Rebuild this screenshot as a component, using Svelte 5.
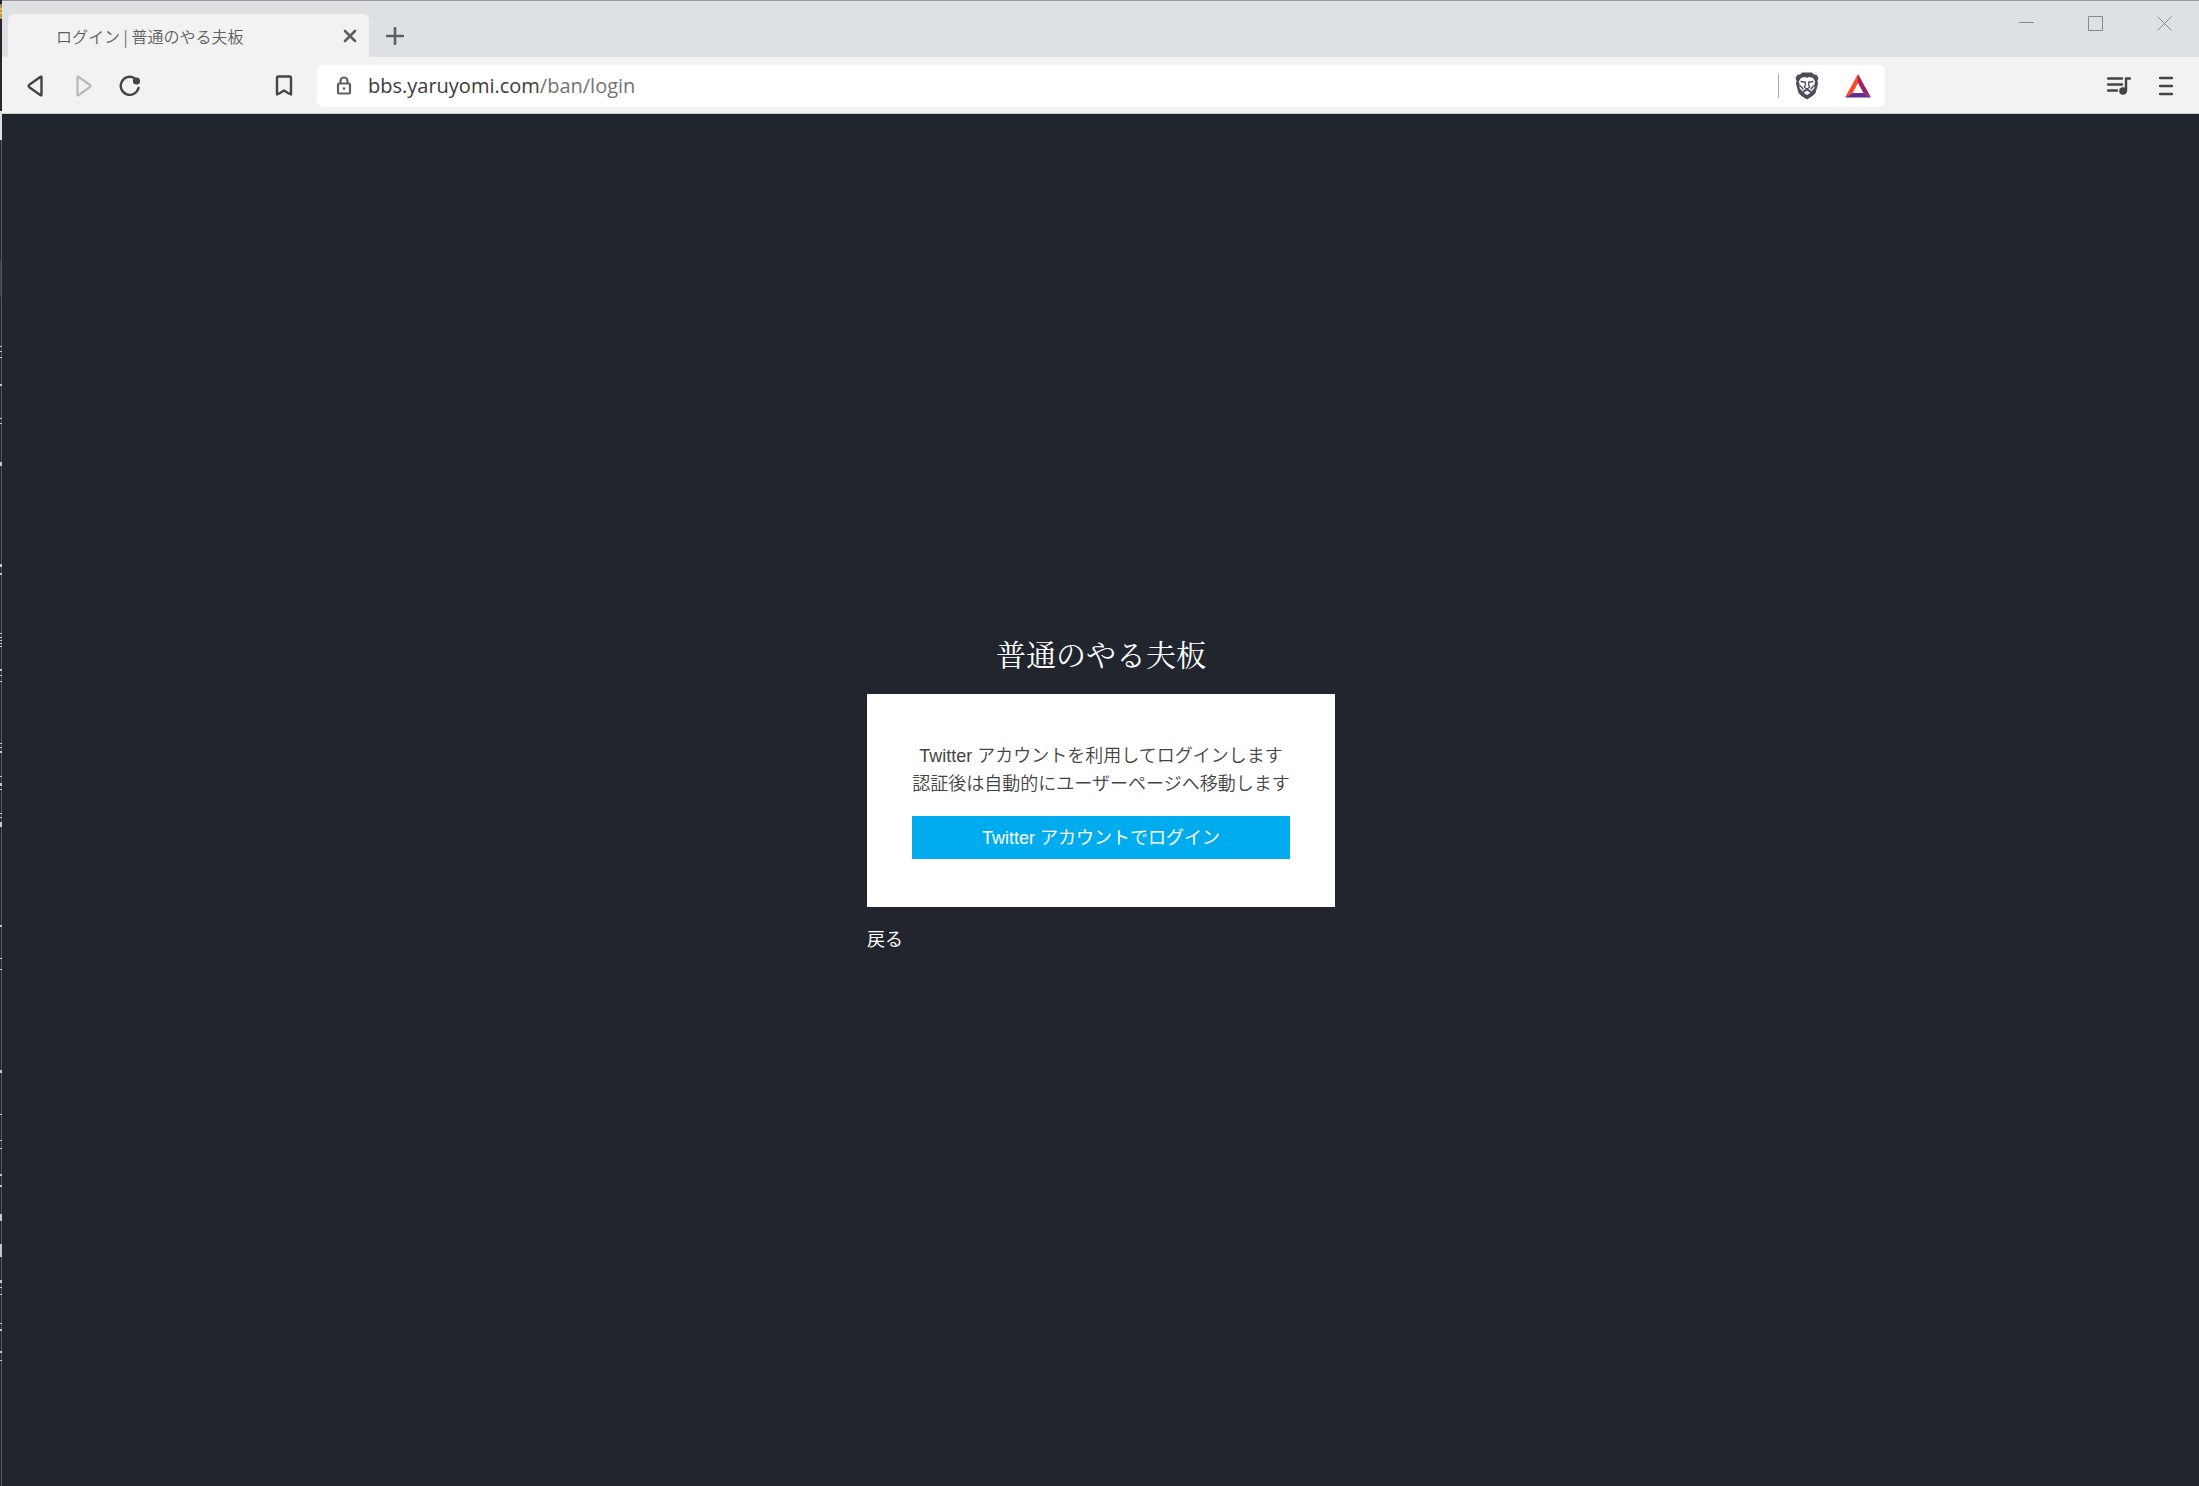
<script>
  const host = 'bbs.yaruyomi.com';
  const path = '/ban/login';
  const marks = [
    [346, 1], [351, 1], [357, 1], [384, 2], [418, 1], [423, 1], [462, 4],
    [564, 3], [573, 2], [633, 1], [637, 1], [640, 1], [643, 1], [646, 1], [669, 2], [675, 1], [681, 1],
    [743, 1], [747, 1], [751, 2], [776, 1], [783, 3], [789, 1], [813, 1], [817, 1], [822, 5],
    [925, 2], [958, 1], [969, 1], [1070, 3], [1114, 1], [1140, 1], [1148, 1], [1174, 2], [1185, 2],
    [1214, 7], [1244, 13], [1280, 3], [1287, 1], [1294, 1], [1323, 1], [1329, 2], [1351, 2], [1360, 1]
  ];
</script>

<div class="desktop">
  <svg class="behind" aria-hidden="true" width="2" height="1486" viewBox="0 0 2 1486">
    <rect width="2" height="1486" fill="#26262c" />
    <rect x="1" y="140" width="1" height="1346" fill="#56565a" />
    <rect y="261" width="1" height="36" fill="#3e3e43" />
    <rect y="111" width="2" height="29" fill="#dcdedf" />
    <rect y="6" width="2" height="12" fill="#c99530" />
    <path d="M0 5h2M0 9h2M0 13h2M0 18h2" stroke="#e8e2d0" />
    {#each marks as [y, h]}
      <rect {y} width="2" height={h} fill="#c8c8c8" />
    {/each}
  </svg>

  <div class="window">
    <header class="titlebar">
      <div class="tab">
        <span class="tab-title">ログイン | 普通のやる夫板</span>
        <button class="tab-close" aria-label="タブを閉じる">
          <svg width="14" height="14" viewBox="0 0 14 14"><path d="M2 2l10 10M12 2L2 12" /></svg>
        </button>
      </div>
      <button class="new-tab" aria-label="新しいタブ">
        <svg width="18" height="18" viewBox="0 0 18 18"><path d="M9 1v16M1 9h16" /></svg>
      </button>
      <div class="controls">
        <button aria-label="最小化">
          <svg width="16" height="16" viewBox="0 0 16 16"><path d="M0 6.5h15" /></svg>
        </button>
        <button aria-label="最大化">
          <svg width="16" height="16" viewBox="0 0 16 16"><path d="M.5 .5h14v14H.5z" /></svg>
        </button>
        <button aria-label="閉じる">
          <svg width="16" height="16" viewBox="0 0 16 16"><path d="M.5 .5l14 14M14.5 .5l-14 14" /></svg>
        </button>
      </div>
    </header>

    <nav class="toolbar">
      <div class="history">
        <button aria-label="戻る">
          <svg width="20" height="22" viewBox="0 0 20 22"><path d="M15.5 2.2v17.6q0 .8-.9.4L3.3 12.2q-1.4-1.2 0-2.4L14.6 1.8q.9-.4.9.4z" /></svg>
        </button>
        <button class="disabled" aria-label="進む" disabled>
          <svg width="20" height="22" viewBox="0 0 20 22"><path d="M4.5 2.2v17.6q0 .8.9.4L16.7 12.2q1.4-1.2 0-2.4L5.4 1.8q-.9-.4-.9.4z" /></svg>
        </button>
        <button aria-label="再読み込み">
          <svg width="22" height="22" viewBox="0 0 22 22"><path d="M15.5 3.2A9 9 0 1 0 19.5 13" /><circle class="solid" cx="17.5" cy="6" r="3.6" /></svg>
        </button>
      </div>
      <button class="bookmark" aria-label="ブックマーク">
        <svg width="18" height="22" viewBox="0 0 18 22"><path d="M2 3q0-1.5 1.5-1.5h11Q16 1.5 16 3v16.500l-3-1.500-4-2.500-4 2.500-3 1.500z" /></svg>
      </button>
      <div class="address">
        <svg class="lock" width="16" height="20" viewBox="0 0 16 20" aria-hidden="true">
          <rect x="2" y="7.5" width="12" height="10" rx="1" /><path d="M4.5 7V5a3.5 3.5 0 0 1 7 0v2" /><circle cx="8" cy="12.5" r="1.3" />
        </svg>
        <a class="url" href="https://bbs.yaruyomi.com/ban/login">{host}<span>{path}</span></a>
        <div class="shields">
          <button aria-label="Brave Shields">
            <svg width="24" height="28" viewBox="0 0 24 28">
              <path fill="#4c4c5e" d="M7 .5h10l2 2 2.500.2L23.500 6l-1 3 .5 3-2.500 9-3 3L12 27.500 6.500 24l-3-3L1 12l.5-3-1-3 2-3.300L5 2.500z" />
              <path fill="#fff" d="M6 6l3.500-1 2.500.8L14.500 5l3.500 1 2.200 3.500-1 3.500.3 3-3 3.500-1.500-1.500-3-1.500-3 1.500L7.500 19.500l-3-3.500.3-3-1-3.500z" />
              <path fill="#fff" d="M12 18.500l3.500 2.200L12 23l-3.500-2.300z" />
              <path fill="none" stroke="#4c4c5e" stroke-width="1.300" d="M6 9.500l4.500.8M18 9.500l-4.500.8M10.300 10v3l-1 2.200 2.700 1.800 2.700-1.800-1-2.200v-3M5.500 14l2.500 3M18.500 14L16 17" />
            </svg>
          </button>
          <button aria-label="Brave Rewards">
            <svg width="28" height="24" viewBox="0 0 28 24">
              <path fill="#ff4724" d="M14 0v9L8.500 19 1 23.500z" />
              <path fill="#9e1f63" d="M14 0v9l5.500 10 7.500 4.500z" />
              <path fill="#662d91" d="M1 23.500L8.500 19h11l7.500 4.500z" />
            </svg>
          </button>
        </div>
      </div>
      <div class="tools">
        <button aria-label="メディアリスト">
          <svg width="24" height="20" viewBox="0 0 24 20"><path d="M1 2.500h14M1 8.500h14M1 14.500h9M23 2.500h-4V15" /><circle class="solid" cx="16" cy="15" r="3.800" /></svg>
        </button>
        <button aria-label="メニュー">
          <svg width="14" height="20" viewBox="0 0 14 20"><path d="M1 2h12M1 10h12M1 18h12" /></svg>
        </button>
      </div>
    </nav>

    <main>
      <h1>普通のやる夫板</h1>
      <section class="card">
        <p>Twitter アカウントを利用してログインします<br />認証後は自動的にユーザーページへ移動します</p>
        <button class="login">Twitter アカウントでログイン</button>
      </section>
      <a class="back" href="/">戻る</a>
    </main>
  </div>
</div>

<style>
  :global(body) { margin: 0; background: #21252d; }
  .desktop { display: flex; min-height: 100vh; overflow: hidden; font-family: "Liberation Sans", "Noto Sans CJK JP", sans-serif; }
  .behind { flex: none; }
  .window { flex: 1; min-width: 0; display: flex; flex-direction: column; background: #21252d; }
  button { display: flex; align-items: center; justify-content: center; padding: 0; border: 0; background: none; font: inherit; cursor: pointer; }
  button svg { fill: none; stroke: #444; stroke-width: 2.4; stroke-linejoin: round; stroke-linecap: round; }
  button .solid { fill: #444; stroke: none; }

  .titlebar { display: flex; align-items: flex-end; height: 57px; box-sizing: border-box; border-top: 1px solid #96999d; background: #dde1e4; }
  .tab { display: flex; align-items: center; justify-content: space-between; width: 361px; height: 43px; margin-left: 6px; padding: 0 12px 0 48px; box-sizing: border-box; border-radius: 6px 6px 0 0; background: #f2f2f2; }
  .tab-title { font-family: "Noto Sans CJK JP", sans-serif; font-size: 16px; font-weight: 350; line-height: 24px; color: #5d6063; }
  .tab-close svg, .new-tab svg { stroke: #5d6063; stroke-width: 2.6; }
  .new-tab { width: 36px; height: 42px; margin-left: 8px; }
  .controls { display: flex; align-self: flex-start; margin-left: auto; }
  .controls button { width: 69px; height: 46px; }
  .controls svg { stroke: #868a8d; stroke-width: 1; stroke-linecap: butt; stroke-linejoin: miter; }

  .toolbar { display: flex; align-items: center; height: 57px; padding-top: 2px; box-sizing: border-box; border-bottom: 1px solid #cfd1d3; background: #f2f2f2; }
  .history { display: flex; gap: 7px; margin-left: 14px; }
  .history button { width: 40px; height: 40px; }
  .history .disabled svg { stroke: #bcbcbc; }
  .bookmark { width: 40px; height: 40px; margin-left: 114px; }
  .address { display: flex; align-items: center; flex: 1; height: 42px; margin-left: 13px; padding: 0 13px 0 19px; box-sizing: border-box; border-radius: 6px; background: #fff; }
  .lock { fill: none; stroke: #606060; stroke-width: 2.2; }
  .lock circle { fill: #606060; stroke: none; }
  .url { margin-left: 16px; font-family: "Open Sans", sans-serif; font-size: 20px; line-height: 28px; color: #3b3b3b; text-decoration: none; }
  .url span { color: #747474; }
  .shields { display: flex; align-items: center; gap: 25px; height: 24px; margin-left: auto; padding-left: 16px; border-left: 1px solid #aaa; }
  .shields svg { stroke: none; }
  .tools { display: flex; align-items: center; gap: 28px; margin: 0 26px 0 222px; }

  main { flex: 1; display: flex; flex-direction: column; align-items: center; justify-content: center; padding: 0 0 16px 1px; }
  h1 { margin: 0 0 19px; font-family: "Noto Serif CJK JP", "Noto Sans CJK JP", serif; font-size: 30px; font-weight: 400; line-height: 44px; color: #fff; }
  .card { padding: 48px 45px; background: #fff; }
  .card p { margin: 0 0 18px; font-size: 18px; font-weight: 350; line-height: 28px; text-align: center; color: #444; }
  .card .login { width: 100%; height: 43px; padding-bottom: 3px; background: #00acee; color: #fff; font-size: 18px; font-weight: 400; }
  .back { width: 468px; margin-top: 19px; font-size: 18px; line-height: 28px; color: #fff; text-decoration: none; }
</style>
